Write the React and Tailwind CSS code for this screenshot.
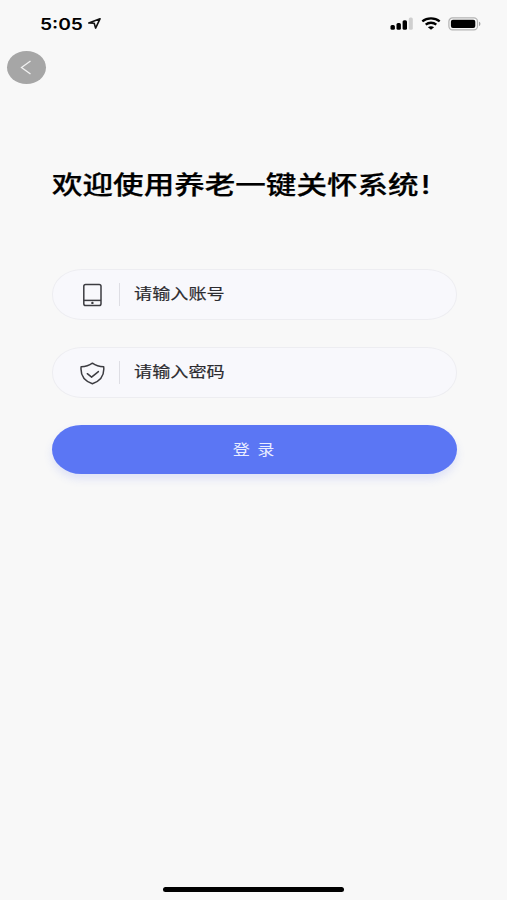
import React from 'react';

const LocationIcon = () => (
  <svg className="w-[15px] h-[13px]" viewBox="0 0 15 13" fill="none" stroke="#111" strokeWidth="1.6" strokeLinejoin="round">
    <path d="M12 1.8 0.8 6l5.4.3 1.4 4.8z" />
  </svg>
);

const SignalIcon = () => (
  <svg className="w-[23px] h-[13px]" viewBox="0 0 23 13">
    <rect x="0.5" y="8" width="4.4" height="4.7" rx="1.5" fill="#000" />
    <rect x="6.5" y="6" width="4.4" height="6.7" rx="1.5" fill="#000" />
    <rect x="12.6" y="3.3" width="4.4" height="9.4" rx="1.5" fill="#000" />
    <rect x="18.8" y="0.5" width="4" height="12.2" rx="1.5" fill="#cfcfcf" />
  </svg>
);

const WifiIcon = () => (
  <svg className="w-[20px] h-[13px]" viewBox="0 0 20 13" fill="none" stroke="#000" strokeWidth="2.3">
    <path d="M1.3 4.4C6.2.4 13.8.4 18.7 4.4" />
    <path d="M4.7 7.6c3-2.5 7.6-2.5 10.6 0" />
    <path d="M10 12.7 6.9 10.2c1.8-1.4 4.4-1.4 6.2 0z" fill="#000" stroke="none" />
  </svg>
);

const BatteryIcon = () => (
  <svg className="w-[34px] h-[14px]" viewBox="0 0 34 14">
    <rect x="0.9" y="0.9" width="28.6" height="12" rx="3.6" fill="none" stroke="#b3b3b3" strokeWidth="1.2" />
    <rect x="2.9" y="2.7" width="24.4" height="8.4" rx="2" fill="#000" />
    <path d="M31 4.8c1.9.5 1.9 3.7 0 4.2z" fill="#a3a3a3" />
  </svg>
);

const TabletIcon = () => (
  <svg className="w-[26px] h-[24px]" viewBox="0 0 26 24" fill="none" stroke="#3c3c41" strokeWidth="1.5">
    <rect x="4.8" y="1.5" width="17.2" height="21" rx="1.8" />
    <path d="M4.8 17.4H22" />
    <circle cx="13.4" cy="19.9" r="1.2" fill="#3c3c41" stroke="none" />
  </svg>
);

const ShieldIcon = () => (
  <svg className="w-[26px] h-[24px]" viewBox="0 0 26 24" fill="none" stroke="#3c3c41" strokeWidth="1.5" strokeLinejoin="round" strokeLinecap="round">
    <path d="M13.4 2.2C10.4 4.4 6.4 5.7 2.1 5.8c-.7 7 2 13.8 11.3 17C22.7 19.6 25.4 12.8 24.7 5.8 20.4 5.7 16.4 4.4 13.4 2.2z" />
    <path d="m8.3 12.7 4.3 3.5 6.8-5.6" />
  </svg>
);

const Field = ({ icon, label }) => (
  <div className="flex items-center h-[51px] pl-[26.4px] rounded-[30px/25px] border border-[#ededf1] bg-[#f8f8fc]">
    {icon}
    <span className="w-px h-[23px] ml-[14px] bg-[#dedee4]" />
    <span className="ml-[13.6px] pb-[2px] text-[15px] leading-[22px] text-[#2c2c30] origin-left scale-x-[1.21] whitespace-nowrap [-webkit-text-stroke:0.2px_#2c2c30]">
      {label}
    </span>
  </div>
);

export default function App() {
  return (
    <div className="flex flex-col w-full h-screen overflow-hidden bg-[#f8f8f8] font-['Inter','Noto_Sans_CJK_SC',sans-serif]">
      <div className="flex items-center justify-between h-[47px] pl-[40.4px] pr-[25px]">
        <div className="flex items-center">
          <span className="w-[48px] text-[16px] leading-5 font-semibold text-black">
            <span className="inline-block origin-left scale-x-[1.2]">5:05</span>
          </span>
          <LocationIcon />
        </div>
        <div className="flex items-center">
          <SignalIcon />
          <span className="ml-[8px]"><WifiIcon /></span>
          <span className="ml-[7px]"><BatteryIcon /></span>
        </div>
      </div>

      <button className="flex items-center justify-center w-[39px] h-[33px] mt-[4px] ml-[6.6px] rounded-[50%] bg-[#a6a6a6]">
        <svg className="w-[12px] h-[15px]" viewBox="0 0 12 15" fill="none" stroke="#f2f2f2" strokeWidth="1.3">
          <path d="M10.5 1 1.5 7.5l9 6.5" />
        </svg>
      </button>

      <main className="pl-[51.6px] pr-[50.4px] mt-[83px] flex flex-col">
        <h1 className="h-[36px] text-[25px] leading-[36px] font-medium text-black origin-left scale-x-[1.222] whitespace-nowrap [-webkit-text-stroke:0.25px_#000]">
          欢迎使用养老一键关怀系统<span className="ml-[2px]">!</span>
        </h1>

        <div className="flex flex-col gap-[27px] mt-[66px]">
          <Field icon={<TabletIcon />} label="请输入账号" />
          <Field icon={<ShieldIcon />} label="请输入密码" />
          <button className="flex items-center justify-center h-[49px] pr-[2px] rounded-[30px/25px] bg-[#5b76f4] text-[14.5px] text-[#e9edff] shadow-[0_5px_8px_rgba(91,118,244,0.16)]">
            <span className="scale-x-[1.18] whitespace-pre [word-spacing:2px]">登 录</span>
          </button>
        </div>
      </main>

      <div className="w-[181px] h-[5px] mt-auto mb-[8px] mx-auto rounded-full bg-black" />
    </div>
  );
}
